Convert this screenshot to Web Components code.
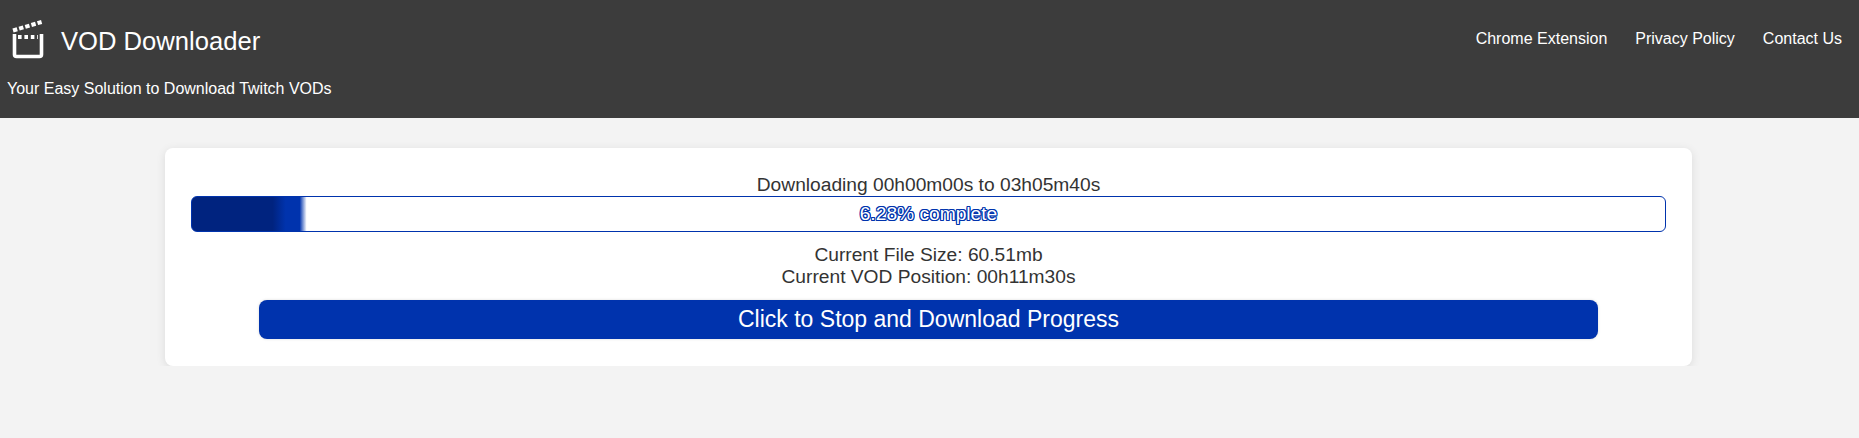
<!DOCTYPE html>
<html lang="en">
<head>
<meta charset="utf-8">
<title>VOD Downloader</title>
<style>
  html, body { margin: 0; padding: 0; }
  body {
    background: #f3f3f3;
    color: #333;
    font-family: "Liberation Sans", Arial, sans-serif;
  }
</style>
</head>
<body>
<site-header>
  <nav-link slot="nav">Chrome Extension</nav-link>
  <nav-link slot="nav">Privacy Policy</nav-link>
  <nav-link slot="nav">Contact Us</nav-link>
</site-header>
<download-card>
  <progress-bar percent="6.28" label="6.28% complete" slot="bar"></progress-bar>
  <span slot="size">Current File Size: 60.51mb</span>
  <span slot="position">Current VOD Position: 00h11m30s</span>
  <stop-button slot="action">Click to Stop and Download Progress</stop-button>
</download-card>
<script>
class SiteHeader extends HTMLElement {
  connectedCallback() {
    this.attachShadow({ mode: 'open' });
    this.shadowRoot.innerHTML = `
      <style>
        :host {
          display: flex;
          justify-content: space-between;
          align-items: flex-start;
          height: 118px;
          box-sizing: border-box;
          background: #3c3c3c;
          color: #fff;
          padding: 0 17px 0 7px;
        }
        .logo {
          display: flex;
          align-items: center;
          height: 56px;
          margin-top: 13px;
          font-size: 25.6px;
        }
        svg { display: block; width: 40px; height: 44px; margin: -1px 14px 0 0; }
        p { margin: 11px 0 0; font-size: 16px; line-height: 18px; }
        nav { display: flex; gap: 28px; margin-top: 30px; }
      </style>
      <div>
        <div class="logo">
          <svg viewBox="0 0 40 44" fill="none" stroke="#fff">
            <path d="M7.5 15v20.5a2 2 0 0 0 2 2h23a2 2 0 0 0 2-2V15" stroke-width="3.6"/>
            <path d="M11 18h20" stroke-width="3.8" stroke-dasharray="3.6 2.8"/>
            <path d="M6 11.5 34.6 3" stroke-width="4" stroke-dasharray="4.4 2"/>
          </svg>
          <span>VOD Downloader</span>
        </div>
        <p>Your Easy Solution to Download Twitch VODs</p>
      </div>
      <nav><slot name="nav"></slot></nav>
    `;
  }
}
customElements.define('site-header', SiteHeader);

class NavLink extends HTMLElement {
  connectedCallback() {
    this.attachShadow({ mode: 'open' });
    this.shadowRoot.innerHTML = `
      <style>
        :host { display: block; font-size: 16px; line-height: 18px; color: #fff; }
      </style>
      <slot></slot>
    `;
  }
}
customElements.define('nav-link', NavLink);

class DownloadCard extends HTMLElement {
  connectedCallback() {
    this.attachShadow({ mode: 'open' });
    this.shadowRoot.innerHTML = `
      <style>
        :host {
          display: flex;
          flex-direction: column;
          align-items: center;
          box-sizing: border-box;
          width: 1527px;
          height: 218px;
          margin: 30px 0 0 165px;
          padding: 26px 26px 0;
          background: #fff;
          border-radius: 8px;
          box-shadow: 0 2px 10px rgba(0, 0, 0, 0.1);
          font-size: 19.2px;
          line-height: 22px;
          color: #333;
        }
        .heading { height: 22px; }
        .bar { align-self: stretch; display: block; }
        .stats { display: flex; flex-direction: column; align-items: center; margin-top: 12px; }
        .action { align-self: stretch; display: block; margin: 12px 68px 0; }
      </style>
      <div class="heading">Downloading 00h00m00s to 03h05m40s</div>
      <div class="bar"><slot name="bar"></slot></div>
      <div class="stats">
        <slot name="size"></slot>
        <slot name="position"></slot>
      </div>
      <div class="action"><slot name="action"></slot></div>
    `;
  }
}
customElements.define('download-card', DownloadCard);

class ProgressBar extends HTMLElement {
  connectedCallback() {
    const pct = parseFloat(this.getAttribute('percent'));
    const w = pct * 18.1; // fill edge lands where the reference track fades out
    this.attachShadow({ mode: 'open' });
    this.shadowRoot.innerHTML = `
      <style>
        :host {
          display: flex;
          align-items: center;
          justify-content: center;
          box-sizing: border-box;
          height: 36px;
          padding-bottom: 1px;
          border: 1px solid #0033ad;
          border-radius: 6px;
          background: linear-gradient(90deg,
            #00237f 0, #00237f ${w - 33}px, #0033ad ${w - 20}px, #0033ad ${w - 6}px, #fff ${w + 1}px);
          font-size: 19.2px;
          color: #fff;
          text-shadow: -1px -1px 0 #0033ad, 1px -1px 0 #0033ad, -1px 1px 0 #0033ad, 1px 1px 0 #0033ad,
            0 -1px 0 #0033ad, 0 1px 0 #0033ad, -1px 0 0 #0033ad, 1px 0 0 #0033ad;
        }
      </style>
      <span>${this.getAttribute('label')}</span>
    `;
  }
}
customElements.define('progress-bar', ProgressBar);

class StopButton extends HTMLElement {
  connectedCallback() {
    this.attachShadow({ mode: 'open' });
    this.shadowRoot.innerHTML = `
      <style>
        :host {
          display: flex;
          align-items: center;
          justify-content: center;
          box-sizing: border-box;
          height: 39px;
          padding-bottom: 1px;
          background: #0033ad;
          color: #fff;
          border-radius: 8px;
          font-size: 23px;
          box-shadow: 0 0 3px rgba(0, 0, 0, 0.15);
        }
      </style>
      <slot></slot>
    `;
  }
}
customElements.define('stop-button', StopButton);
</script>
</body>
</html>
